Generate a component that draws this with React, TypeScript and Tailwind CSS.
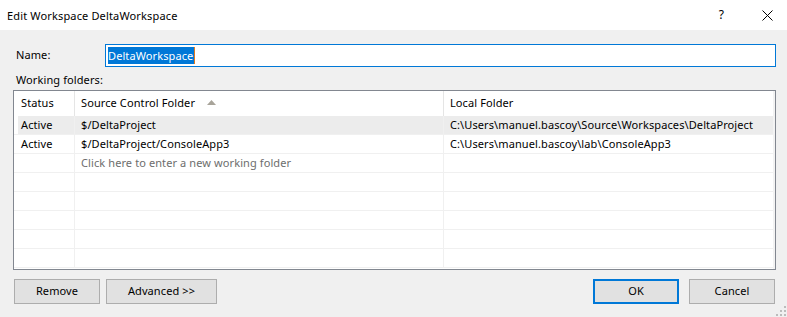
import React from 'react';

const FONT = { fontFamily: '"Segoe UI", "Noto Sans", sans-serif' };

type Row = { status: string; source: string; local: string; selected?: boolean; hint?: boolean };

const ROWS: Row[] = [
  { status: 'Active', source: '$/DeltaProject', local: 'C:\\Users\\manuel.bascoy\\Source\\Workspaces\\DeltaProject', selected: true },
  { status: 'Active', source: '$/DeltaProject/ConsoleApp3', local: 'C:\\Users\\manuel.bascoy\\lab\\ConsoleApp3' },
  { status: '', source: 'Click here to enter a new working folder', local: '', hint: true },
  { status: '', source: '', local: '' },
  { status: '', source: '', local: '' },
  { status: '', source: '', local: '' },
  { status: '', source: '', local: '' },
  { status: '', source: '', local: '' },
];

function DialogButton({ label, primary, width }: { label: string; primary?: boolean; width: string }) {
  return (
    <button
      className={`${width} h-[25px] bg-[#e1e1e1] text-[11px] tracking-[0.1px] text-black flex items-center justify-center ${
        primary ? 'border-2 border-[#0078d7]' : 'border border-[#adadad]'
      }`}
    >
      {label}
    </button>
  );
}

export default function App() {
  return (
    <div className="w-[787px] h-[317px] bg-[#f0f0f0] flex flex-col relative overflow-hidden text-[11px] tracking-[0.1px] text-black" style={FONT}>
      {/* Title bar */}
      <div className="h-[30px] bg-white flex items-center pl-[7px] shrink-0">
        <span className="leading-none text-[11px] tracking-[0.15px]">Edit Workspace DeltaWorkspace</span>
        <span className="ml-auto mr-[38px] leading-none text-[12px]">?</span>
        <svg width="11" height="11" viewBox="0 0 11 11" className="mr-[14px]">
          <path d="M0.5 0.5 L10.5 10.5 M10.5 0.5 L0.5 10.5" stroke="#000" strokeWidth="1" />
        </svg>
      </div>

      {/* Name row */}
      <div className="flex items-center mt-[14px] h-[23px] pl-[16px] pr-[11px]">
        <span className="w-[89px]">Name:</span>
        <div className="flex-1 h-[23px] bg-white border border-[#0078d7] flex items-center pl-[2px]">
          <span className="bg-[#0078d7] text-white h-[17px] leading-[17px] pr-[1px]">DeltaWorkspace</span>
          <span className="w-[1px] h-[17px] bg-[#e07a1f]" />
        </div>
      </div>

      <div className="mt-[5px] pl-[16px] h-[16px] leading-[16px]">Working folders:</div>

      {/* Working folders list */}
      <div className="mt-[2px] ml-[13px] w-[763px] h-[180px] border border-[#828790] bg-[#f3f3f3] flex flex-col overflow-hidden">
        <div className="w-[759px] bg-white flex flex-col flex-1">
          {/* Header */}
          <div className="flex h-[25px] shrink-0">
            <div className="w-[61px] pl-[7px] flex items-center border-r border-[#e5e5e5]">Status</div>
            <div className="w-[369px] pl-[6px] flex items-center border-r border-[#e5e5e5]">
              Source Control Folder
              <svg width="9" height="5" viewBox="0 0 9 5" className="ml-[12px] mb-[2px]">
                <path d="M4.5 0 L9 5 L0 5 Z" fill="#a8a49a" />
              </svg>
            </div>
            <div className="flex-1 pl-[6px] flex items-center">Local Folder</div>
          </div>
          {/* Rows */}
          {ROWS.map((r, i) => (
            <div key={i} className="flex h-[19px] shrink-0 border-b border-[#f0f0f0] pl-[4px]">
              <div className={`flex flex-1 ${r.selected ? 'bg-[#ececec]' : ''}`}>
                <div className="w-[57px] pl-[3px] flex items-center border-r border-[#f0f0f0]">{r.status}</div>
                <div className={`w-[369px] pl-[6px] flex items-center border-r border-[#f0f0f0] ${r.hint ? 'text-[#6d6d6d]' : ''}`}>
                  {r.source}
                </div>
                <div className="flex-1 pl-[6px] flex items-center whitespace-nowrap">{r.local}</div>
              </div>
            </div>
          ))}
        </div>
      </div>

      {/* Buttons */}
      <div className="flex mt-[9px] pl-[14px] pr-[12px]">
        <DialogButton label="Remove" width="w-[86px]" />
        <div className="ml-[6px]">
          <DialogButton label="Advanced >>" width="w-[111px]" />
        </div>
        <div className="ml-auto">
          <DialogButton label="OK" width="w-[86px]" primary />
        </div>
        <div className="ml-[10px]">
          <DialogButton label="Cancel" width="w-[86px]" />
        </div>
      </div>

      {/* Resize grip */}
      <svg width="12" height="12" viewBox="0 0 12 12" className="absolute right-0 bottom-0">
        <rect x="9" y="1" width="2" height="2" fill="#bcbcbc" />
        <rect x="5" y="5" width="2" height="2" fill="#bcbcbc" />
        <rect x="9" y="5" width="2" height="2" fill="#bcbcbc" />
        <rect x="1" y="9" width="2" height="2" fill="#bcbcbc" />
        <rect x="5" y="9" width="2" height="2" fill="#bcbcbc" />
        <rect x="9" y="9" width="2" height="2" fill="#bcbcbc" />
      </svg>
    </div>
  );
}
